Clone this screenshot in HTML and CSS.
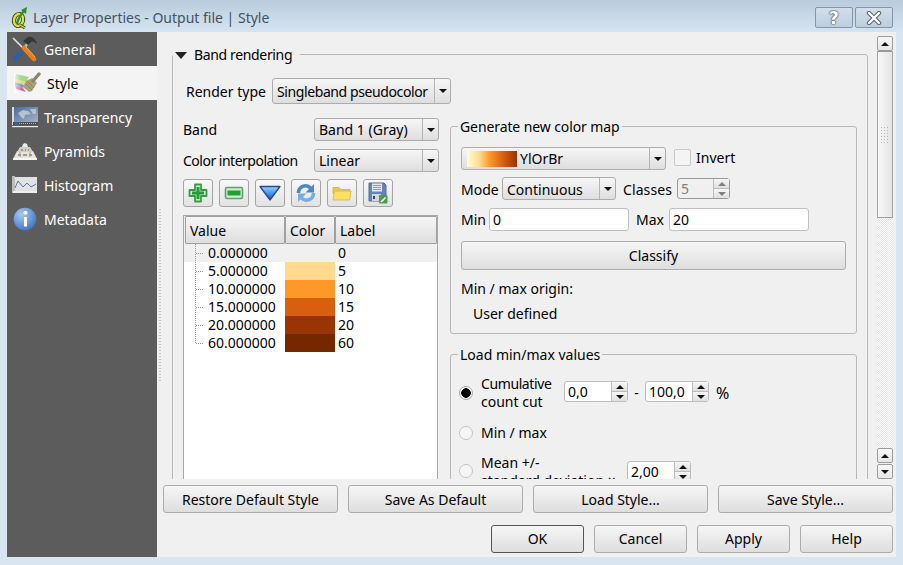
FILE: index.html
```html
<!DOCTYPE html>
<html lang="en">
<head>
<meta charset="utf-8">
<title>Layer Properties - Output file | Style</title>
<link rel="stylesheet" href="styles.css">
</head>
<body>
<div class="window">
  <header class="titlebar">
    <svg class="app-icon" width="18" height="22" viewBox="0 0 18 22"><ellipse cx="7.500" cy="13" rx="4.500" ry="6" fill="none" stroke="#39421c" stroke-width="4.200" transform="rotate(12 7.500 13)"/><ellipse cx="7.500" cy="13" rx="4.500" ry="6" fill="none" stroke="#dfe52c" stroke-width="2.400" transform="rotate(12 7.500 13)"/><path d="M9 18l5 3" stroke="#39421c" stroke-width="3"/><path d="M9 18l5 3" stroke="#dfe52c" stroke-width="1.400"/><path d="M6 17C7 12 10 7 14 3" stroke="#2f8f24" stroke-width="2.400" fill="none"/><path d="M16 0l-1 7-5-4z" fill="#2f8f24"/></svg>
    <span class="title-text">Layer Properties - Output file | Style</span>
    <div class="caption-buttons">
      <button class="caption-btn"><span class="cap-glyph">?</span></button>
      <button class="caption-btn"><svg width="16" height="14" viewBox="0 0 16 14"><path d="M3 2l10 10M13 2L3 12" stroke="#5a6470" stroke-width="4.400" stroke-linecap="round"/><path d="M3 2l10 10M13 2L3 12" stroke="#fff" stroke-width="2.400" stroke-linecap="round"/></svg></button>
    </div>
  </header>
  <div class="client">
    <nav class="sidebar">
      <div class="nav-item">
        <svg class="nav-icon" width="26" height="26" viewBox="0 0 26 26"><path d="M1 2l11 11" stroke="#e4e4e4" stroke-width="1.600"/><path d="M16 7L12 12" stroke="#b4bac0" stroke-width="2.600"/><path d="M3 23L12 13" stroke="#2b62a6" stroke-width="4.600" stroke-linecap="round"/><path d="M11 5l5-4c4-1 8 2 9 7-2-2-5-3-6-2l-3 3z" fill="#33373b"/><path d="M12 12l10 11" stroke="#f27a12" stroke-width="4.600" stroke-linecap="round"/><path d="M14 11l9 10" stroke="#ffb060" stroke-width="1"/></svg>
        <span>General</span>
      </div>
      <div class="nav-item active">
        <svg class="nav-icon style-icon" width="27" height="22" viewBox="0 0 27 22"><defs><linearGradient id="fade" x1="0" x2="1" y1="0" y2="0"><stop offset="0" stop-color="#fff" stop-opacity=".7"/><stop offset=".5" stop-color="#fff" stop-opacity="0"/></linearGradient></defs><path d="M2 2l13 3-3 5L1 7z" fill="#a8d48c"/><path d="M1 7l11 3-2 3L1 10z" fill="#e2dc78"/><path d="M1 10l9 3-1 3-8-3z" fill="#6a9cd8"/><path d="M1 13l8 3 3 4-10-3z" fill="#d86a9a"/><path d="M0 1h15v20H0z" fill="url(#fade)"/><path d="M12 9l6-3 5 5-5 8-3 1-6-5z" fill="#aaa178"/><path d="M12 12l6 6M14 10l6 6" stroke="#8a8260" stroke-width="1"/><path d="M19 9l6-7" stroke="#8e8668" stroke-width="3.400" stroke-linecap="round"/></svg>
        <span>Style</span>
      </div>
      <div class="nav-item">
        <svg class="nav-icon" width="26" height="22" viewBox="0 0 26 22"><defs><linearGradient id="map" x1="0" x2="1" y1="0" y2="1"><stop offset="0" stop-color="#4a6c98"/><stop offset="1" stop-color="#a4b4c6"/></linearGradient></defs><rect x="0" y="1" width="2" height="18" fill="#dcdcdc"/><rect x="2" y="1" width="24" height="15" fill="url(#map)"/><path d="M6 7l5-3 5 1 3 3-6 1-1 4-3-2z" fill="#c4d0dc" opacity=".8"/><path d="M18 3h6v5h-3z" fill="#c0ccd8" opacity=".8"/><rect x="1" y="16" width="25" height="3" fill="#4e4e4e"/><path d="M3 17.500h22" stroke="#bbb" stroke-dasharray="1 1"/><rect x="3" y="16" width="3" height="3" fill="#2f5fb8"/><rect x="0" y="20" width="26" height="1.200" fill="#e8e8e8"/></svg>
        <span>Transparency</span>
      </div>
      <div class="nav-item">
        <svg class="nav-icon" width="26" height="20" viewBox="0 0 26 20"><path d="M1 18l4-8h16l4 8z" fill="#e6e4dc"/><path d="M5 11l3-5h10l3 5z" fill="#d2d0c6"/><path d="M10 6l1-3 2-1 2 1 1 3z" fill="#ecebe4"/><rect x="1" y="17" width="24" height="2" fill="#f6f6f0"/><path d="M6 14h3M11 14h4M17 14h3M9 9h2M13 9h1M16 9h1" stroke="#83827a" stroke-width="1.600"/><path d="M8 11v5M18 11v5" stroke="#9c9b92"/></svg>
        <span>Pyramids</span>
      </div>
      <div class="nav-item">
        <svg class="nav-icon" width="26" height="20" viewBox="0 0 26 20"><rect x="3" y="2" width="22" height="14" fill="#e2e2e2"/><rect x="0" y="1" width="3" height="17" fill="#bdbdbd"/><rect x="1" y="16" width="24" height="2" fill="#f0f0f0"/><path d="M3 13l3-7 5 6 4-4 4 4 5-3" stroke="#5a78a8" fill="none"/></svg>
        <span>Histogram</span>
      </div>
      <div class="nav-item">
        <svg class="nav-icon" width="24" height="24" viewBox="0 0 24 24"><defs><radialGradient id="ig" cx=".35" cy=".3" r=".8"><stop offset="0" stop-color="#a8c8ee"/><stop offset="1" stop-color="#3a72bc"/></radialGradient></defs><circle cx="12" cy="12" r="11.300" fill="url(#ig)"/><circle cx="12.500" cy="5.800" r="2" fill="#fff"/><path d="M11 10h3v9.500h-3z" fill="#fff"/></svg>
        <span>Metadata</span>
      </div>
    </nav>
    <div class="splitter"><div class="splitter-grip"></div></div>
    <main class="main">
      <div class="scroll-row">
        <div class="viewport">
          <fieldset class="group band-group">
            <legend class="band-legend"><span class="collapse-arrow"></span><span class="tight-35">Band rendering</span></legend>
            <div class="render-row">
              <span class="render-label">Render type</span>
              <div class="combo combo-render"><span class="combo-text tight-40">Singleband pseudocolor</span><span class="combo-drop"></span></div>
            </div>
            <div class="columns">
              <div class="left-col">
                <div class="field-row"><span>Band</span><div class="combo combo-band"><span class="combo-text">Band 1 (Gray)</span><span class="combo-drop"></span></div></div>
                <div class="field-row field-last"><span class="tight-50">Color interpolation</span><div class="combo combo-band"><span class="combo-text">Linear</span><span class="combo-drop"></span></div></div>
                <div class="toolbar">
                  <button class="tool-btn"><svg width="20" height="20" viewBox="0 0 20 20"><path d="M7 1.500h6v5.500h5.500v6H13v5.500H7V13H1.500V7H7z" fill="#cfeacf" stroke="#3a9a48" stroke-width="1.800" stroke-linejoin="round"/><path d="M8.500 4h3v4.500H16v3h-4.500V16h-3v-4.500H4v-3h4.500z" fill="#22a035"/></svg></button>
                  <button class="tool-btn"><svg width="20" height="14" viewBox="0 0 20 14"><rect x="1.500" y="1.500" width="17" height="11" rx="1.500" fill="#d2ecd4" stroke="#5fa06c" stroke-width="1.600"/><rect x="3.500" y="4.500" width="13" height="5" fill="#22a035"/></svg></button>
                  <button class="tool-btn"><svg width="22" height="16" viewBox="0 0 22 16"><defs><linearGradient id="dn" x1="0" x2="0" y1="0" y2="1"><stop offset="0" stop-color="#a2d0fa"/><stop offset=".45" stop-color="#4a9cf0"/><stop offset="1" stop-color="#1550d0"/></linearGradient></defs><path d="M1 1.500h20L11 15z" fill="url(#dn)" stroke="#234a90" stroke-width="1.300" stroke-linejoin="round"/></svg></button>
                  <button class="tool-btn"><svg width="20" height="20" viewBox="0 0 20 20"><path d="M2.500 10a7 7 0 0 1 12-5" stroke="#4a88c8" stroke-width="3.600" fill="none"/><path d="M18 1v8.500h-8.500z" fill="#4a88c8"/><path d="M17.500 10a7 7 0 0 1-12 5" stroke="#76aee4" stroke-width="3.600" fill="none"/><path d="M2 19v-8.500h8.500z" fill="#76aee4"/></svg></button>
                  <button class="tool-btn"><svg width="20" height="16" viewBox="0 0 20 16"><path d="M1 2.500h6l2 2h9v4H1z" fill="#e8c850" stroke="#d2b858"/><path d="M1 15l1.500-9H19l-1.500 9z" fill="#fde060" stroke="#d8bc58"/></svg></button>
                  <button class="tool-btn"><svg width="20" height="22" viewBox="0 0 20 22"><path d="M1 1h15l2 2v16H1z" fill="#6585b2" stroke="#506d96"/><rect x="4" y="1.500" width="10" height="8" fill="#e4e8ee"/><path d="M5 3.500h8M5 5.500h8M5 7.500h8" stroke="#99a"/><rect x="4" y="12" width="9" height="7" fill="#d0d4dc"/><rect x="5" y="14" width="2" height="3" fill="#445"/><rect x="11" y="13" width="8.500" height="8.500" rx="1" fill="#4f9a50"/><path d="M13 20l4.500-4.500" stroke="#fff" stroke-width="1.600"/></svg></button>
                </div>
                <div class="tree-table">
                  <div class="tree-head"><div class="th th-value">Value</div><div class="th th-color">Color</div><div class="th th-label">Label</div></div>
                  <div class="tree-body">
                    <div class="tree-row first"><span class="tree-branch"></span><span class="cell-value">0.000000</span><span class="swatch"></span><span class="cell-label">0</span></div>
                    <div class="tree-row"><span class="tree-branch"></span><span class="cell-value">5.000000</span><span class="swatch c1"></span><span class="cell-label">5</span></div>
                    <div class="tree-row"><span class="tree-branch"></span><span class="cell-value">10.000000</span><span class="swatch c2"></span><span class="cell-label">10</span></div>
                    <div class="tree-row"><span class="tree-branch"></span><span class="cell-value">15.000000</span><span class="swatch c3"></span><span class="cell-label">15</span></div>
                    <div class="tree-row"><span class="tree-branch"></span><span class="cell-value">20.000000</span><span class="swatch c4"></span><span class="cell-label">20</span></div>
                    <div class="tree-row last"><span class="tree-branch"></span><span class="cell-value">60.000000</span><span class="swatch c5"></span><span class="cell-label">60</span></div>
                  </div>
                </div>
              </div>
              <div class="right-col">
                <fieldset class="group sub-group">
                  <legend class="sub-legend tight-10">Generate new color map</legend>
                  <div class="gen-body">
                    <div class="row row-ramp">
                      <div class="combo combo-ramp"><span class="ramp"></span><span class="ramp-name">YlOrBr</span><span class="combo-drop"></span></div>
                      <span class="checkbox"></span><span class="invert-label">Invert</span>
                    </div>
                    <div class="row row-mode">
                      <span class="mode-label">Mode</span>
                      <div class="combo combo-mode"><span class="combo-text">Continuous</span><span class="combo-drop"></span></div>
                      <span class="classes-label">Classes</span>
                      <div class="spin spin-disabled spin-classes"><span class="spin-value">5</span><span class="spin-btns"><span class="spin-up"></span><span class="spin-down"></span></span></div>
                    </div>
                    <div class="row row-minmax">
                      <span class="min-label">Min</span><div class="text-input">0</div>
                      <span class="max-label">Max</span><div class="text-input">20</div>
                    </div>
                    <button class="btn btn-classify">Classify</button>
                    <div class="origin-title">Min / max origin:</div>
                    <div class="origin-value">User defined</div>
                  </div>
                </fieldset>
                <fieldset class="group sub-group load-group">
                  <legend class="sub-legend">Load min/max values</legend>
                  <div class="load-body">
                    <div class="radio-row">
                      <span class="radio checked"></span>
                      <span class="radio-text w-cum"><span class="tight-40">Cumulative</span><br>count cut</span>
                      <div class="spin spin-num"><span class="spin-value">0,0</span><span class="spin-btns"><span class="spin-up"></span><span class="spin-down"></span></span></div>
                      <span class="dash">-</span>
                      <div class="spin spin-num"><span class="spin-value">100,0</span><span class="spin-btns"><span class="spin-up"></span><span class="spin-down"></span></span></div>
                      <span class="percent">%</span>
                    </div>
                    <div class="radio-row gap-mm"><span class="radio"></span><span class="radio-text">Min / max</span></div>
                    <div class="radio-row gap-mean">
                      <span class="radio radio-mean"></span>
                      <span class="radio-text w-mean">Mean +/-<br>standard deviation ×</span>
                      <div class="spin spin-num spin-mean"><span class="spin-value">2,00</span><span class="spin-btns"><span class="spin-up"></span><span class="spin-down"></span></span></div>
                    </div>
                  </div>
                </fieldset>
              </div>
            </div>
          </fieldset>
        </div>
        <div class="vscroll">
          <span class="sb-btn sb-up"></span>
          <div class="sb-thumb"><span class="sb-grip"></span></div>
          <div class="sb-track"></div>
          <span class="sb-btn sb-up"></span>
          <span class="sb-btn sb-down"></span>
        </div>
      </div>
      <div class="style-buttons">
        <button class="btn">Restore Default Style</button>
        <button class="btn">Save As Default</button>
        <button class="btn">Load Style...</button>
        <button class="btn">Save Style...</button>
      </div>
      <div class="dialog-buttons">
        <button class="btn btn-default">OK</button>
        <button class="btn">Cancel</button>
        <button class="btn">Apply</button>
        <button class="btn">Help</button>
      </div>
    </main>
  </div>
</div>
</body>
</html>
```

FILE: styles.css
```css
* { box-sizing: border-box; }
html, body { margin: 0; padding: 0; }
body {
  width: 903px;
  height: 565px;
  overflow: hidden;
  font-family: "Noto Sans", "DejaVu Sans", sans-serif;
  font-size: 14px;
  line-height: 18px;
  color: #000;
  background: #d9e5f1;
}
button { font: inherit; color: inherit; margin: 0; padding: 0; }
fieldset { margin: 0; min-width: 0; }

.tight-10 { letter-spacing: -0.1px; }
.tight-35 { letter-spacing: -0.35px; }
.tight-40 { letter-spacing: -0.4px; }
.tight-50 { letter-spacing: -0.5px; }

.window { width: 903px; height: 565px; display: flex; flex-direction: column; }

.titlebar {
  height: 32px;
  flex: none;
  display: flex;
  align-items: center;
  padding: 3px 10px 0 11px;
  background: linear-gradient(#b9ccdc, #d6e4f1);
}
.app-icon { flex: none; }
.title-text { margin-left: 4px; color: #44525f; }
.caption-buttons { margin-left: auto; display: flex; gap: 2px; align-self: flex-start; padding-top: 4px; }
.caption-btn {
  width: 38px;
  height: 21px;
  border: 1px solid #8196ac;
  border-radius: 2px;
  background: linear-gradient(#d3dfea, #bccede);
  display: flex;
  align-items: center;
  justify-content: center;
}
.cap-glyph { font: bold 17px/18px "DejaVu Sans", sans-serif; color: #fff; text-shadow: 0 0 1px #445, 0 0 2px #445, 0 0 1px #445; }

.client { flex: 1; min-height: 0; display: flex; margin: 0 7px 8px 7px; background: #f0f0f0; }

.sidebar { width: 150px; flex: none; background: #5c5c5c; color: #fff; }
.nav-item { height: 34px; display: flex; align-items: center; padding: 2px 0 0 5px; }
.nav-item .nav-icon { width: 26px; flex: none; margin-right: 6px; margin-bottom: 2px; }
.nav-item.active { background: #f4f4f4; color: #000; padding-left: 7px; }
.nav-item.active .nav-icon { width: 27px; margin-right: 6px; }

.splitter { width: 6px; flex: none; display: flex; align-items: center; justify-content: center; }
.splitter-grip {
  width: 2px;
  height: 172px;
  background: repeating-linear-gradient(#c4c4c4 0 1px, transparent 1px 3px);
}

.main { flex: 1; min-width: 0; display: flex; flex-direction: column; padding: 4px 3px 4px 0; }
.scroll-row { height: 443px; flex: none; display: flex; }
.viewport { flex: 1; min-width: 0; overflow: hidden; padding: 9px 0 0 9px; }

.group { border: 1px solid #b8b8b8; border-radius: 3px; padding: 0; }
.band-group { width: 696px; height: 600px; }
.band-legend { padding: 2px 8px 0 2px; margin: 0; display: flex; align-items: center; height: 18px; }
.collapse-arrow {
  width: 0; height: 0; margin-right: 7px;
  border-left: 6px solid transparent; border-right: 6px solid transparent; border-top: 7px solid #222;
}
.render-row { display: flex; align-items: center; padding: 15px 0 0 13px; }
.render-label { width: 86px; flex: none; padding-top: 2px; }

.combo {
  position: relative;
  display: flex;
  align-items: center;
  height: 23px;
  border: 1px solid #acacac;
  border-radius: 3px;
  background: linear-gradient(#f6f6f6, #dedede);
  flex: none;
}
.combo-text { padding-left: 4px; flex: 1; white-space: nowrap; }
.combo-drop {
  width: 16px;
  align-self: stretch;
  border-left: 1px solid #b4b4b4;
  flex: none;
  display: flex;
  align-items: center;
  justify-content: center;
}
.combo-drop::after {
  content: "";
  width: 0; height: 0;
  border-left: 4px solid transparent; border-right: 4px solid transparent; border-top: 4px solid #111;
}
.combo-render { width: 179px; height: 26px; }
.combo-render .combo-text { padding-top: 2px; }
.combo-band { width: 125px; }
.combo-ramp { width: 205px; }
.combo-mode { width: 114px; }
.combo-mode .combo-text { padding-top: 2px; }

.columns { display: flex; gap: 11px; padding-left: 10px; }
.left-col { width: 256px; flex: none; padding-top: 14px; }
.field-row { display: flex; align-items: center; justify-content: space-between; margin-bottom: 8px; }
.field-last { margin-bottom: 7px; }
.toolbar { display: flex; gap: 6px; margin-bottom: 8px; }
.tool-btn {
  width: 30px; height: 28px;
  border: 1px solid #a4a4a4;
  border-radius: 3px;
  background: linear-gradient(#f8f8f8, #e2e2e2);
  display: flex; align-items: center; justify-content: center;
}
.tree-table { width: 255px; height: 300px; border: 1px solid #a8a8a8; background: #fff; }
.tree-head { display: flex; height: 28px; background: #f0f0f0; padding: 0 0 0 1px; }
.th {
  display: flex; align-items: center; padding: 2px 0 0 4px;
  border: 1px solid #a0a0a0;
  border-radius: 1px;
  background: linear-gradient(#f6f6f6, #dedede);
}
.th-value { width: 100px; }
.th-color { width: 50px; }
.th-label { width: 102px; }
.tree-row { display: flex; height: 18px; align-items: center; }
.tree-row.first { background: #f0f0f0; }
.tree-branch {
  width: 24px; height: 18px; flex: none;
  position: relative;
}
.tree-branch::before { content: ""; display: block; width: 1px; height: 18px; margin-left: 11px; background: repeating-linear-gradient(#999 0 1px, transparent 1px 2px); }
.tree-branch::after { content: ""; position: absolute; left: 12px; top: 9px; width: 8px; height: 1px; background: repeating-linear-gradient(90deg, #999 0 1px, transparent 1px 2px); }
.tree-row.last .tree-branch::before { height: 10px; }
.cell-value { width: 77px; flex: none; }
.swatch { width: 50px; height: 18px; flex: none; }
.c1 { background: #fed98e; }
.c2 { background: #fe9929; }
.c3 { background: #d95f0e; }
.c4 { background: #993404; }
.c5 { background: #752800; }
.cell-label { padding-left: 3px; }

.right-col { width: 407px; flex: none; padding-top: 13px; }
.sub-group { width: 407px; }
.sub-legend { margin-left: 7px; padding: 1px 2px 0; height: 18px; }
.gen-body { padding: 12px 10px 10px 10px; }
.row { display: flex; align-items: center; }
.checkbox {
  width: 17px; height: 17px; margin: 0 5px 2px 8px;
  border: 1px solid #c8c8c8; border-radius: 2px; background: #f4f4f4; flex: none;
}
.invert-label { margin-bottom: 2px; }
.ramp { width: 50px; height: 16px; margin-left: 5px; flex: none; background: linear-gradient(90deg, #ffffd4, #fed98e 25%, #fe9929 45%, #d95f0e 72%, #993404); }
.ramp-name { margin-left: 3px; flex: 1; }
.row-mode { margin-top: 7px; height: 23px; }
.mode-label { width: 41px; flex: none; padding-top: 2px; }
.classes-label { margin-left: 7px; width: 54px; flex: none; padding-top: 2px; letter-spacing: 0.1px; }
.spin {
  display: flex; height: 21px; flex: none;
  border: 1px solid #bcbcbc; border-radius: 3px; background: #fff;
}
.spin-value { flex: 1; padding-left: 3px; line-height: 20px; }
.spin-btns { width: 16px; flex: none; display: flex; flex-direction: column; border-left: 1px solid #bcbcbc; }
.spin-up, .spin-down { flex: 1; display: flex; align-items: center; justify-content: center; background: linear-gradient(#f6f6f6, #e0e0e0); }
.spin-up { border-bottom: 1px solid #bcbcbc; }
.spin-up::after { content: ""; width: 0; height: 0; border-left: 4px solid transparent; border-right: 4px solid transparent; border-bottom: 4px solid #111; }
.spin-down::after { content: ""; width: 0; height: 0; border-left: 4px solid transparent; border-right: 4px solid transparent; border-top: 4px solid #111; }
.spin-classes { width: 53px; }
.spin-disabled { background: #f0f0f0; color: #808080; border-color: #9a9a9a; }
.spin-disabled .spin-up::after { border-bottom-color: #808080; }
.spin-disabled .spin-down::after { border-top-color: #808080; }
.row-minmax { margin-top: 8px; height: 23px; }
.min-label { width: 28px; flex: none; }
.max-label { width: 33px; margin-left: 7px; flex: none; }
.text-input {
  width: 140px; height: 23px; padding-left: 3px; line-height: 22px;
  border: 1px solid #c0c0c0; border-radius: 3px; background: #fff; flex: none;
}
.btn {
  border: 1px solid #acacac;
  border-radius: 3px;
  background: linear-gradient(#f6f6f6, #dedede);
  text-align: center;
}
.btn-classify { display: block; width: 385px; height: 29px; margin-top: 10px; }
.origin-title { margin-top: 10px; }
.origin-value { margin-top: 7px; margin-left: 12px; }

.load-group { margin-top: 11px; height: 200px; }
.load-body { padding: 12px 0 0 8px; }
.radio-row { display: flex; align-items: center; }
.radio {
  width: 14px; height: 14px; flex: none; margin-right: 8px;
  border: 1px solid #c4c4c4; border-radius: 50%; background: #f6f6f6;
}
.radio.checked { background: radial-gradient(circle, #000 0 4.5px, #f4f4f4 5px); border-color: #aaa; }
.radio-mean { margin-bottom: 2px; }
.w-cum { width: 83px; flex: none; }
.w-mean { width: 146px; flex: none; white-space: nowrap; }
.spin-num { width: 64px; margin-bottom: 3px; }
.spin-mean { margin-bottom: 1px; }
.dash { width: 17px; text-align: center; flex: none; }
.percent { margin-left: 7px; font-size: 16px; }
.gap-mm { margin-top: 13px; }
.gap-mean { margin-top: 12px; }

.vscroll { width: 16px; flex: none; display: flex; flex-direction: column; }
.sb-btn {
  height: 15px; flex: none; display: flex; align-items: center; justify-content: center;
  border: 1px solid #9c9c9c; border-radius: 2px;
  background: linear-gradient(#f8f8f8, #e6e6e6);
}
.sb-up::after { content: ""; width: 0; height: 0; border-left: 4px solid transparent; border-right: 4px solid transparent; border-bottom: 4px solid #111; }
.sb-down::after { content: ""; width: 0; height: 0; border-left: 4px solid transparent; border-right: 4px solid transparent; border-top: 4px solid #111; }
.sb-down { margin-top: 1px; }
.sb-thumb {
  height: 167px; flex: none; display: flex; align-items: center; justify-content: center;
  border: 1px solid #a4a4a4; border-top-color: #999;
  background: linear-gradient(90deg, #f8f8f8, #e4e4e4);
}
.sb-grip {
  width: 10px; height: 18px;
  background: radial-gradient(circle, #b4b4b4 0 1px, transparent 1px) 0 0 / 3px 3px;
}
.sb-track {
  flex: 1;
  background: repeating-conic-gradient(#ffffff 0 25%, #e6e6e6 0 50%) 0 0 / 2px 2px;
}

.style-buttons { display: flex; gap: 10px; margin-top: 6px; height: 28px; flex: none; }
.style-buttons .btn { width: 175px; padding-top: 2px; }
.dialog-buttons { display: flex; gap: 10px; margin-top: 12px; height: 28px; flex: none; justify-content: flex-end; }
.dialog-buttons .btn { width: 93px; }
.dialog-buttons .btn-default { border-color: #555; }
```
